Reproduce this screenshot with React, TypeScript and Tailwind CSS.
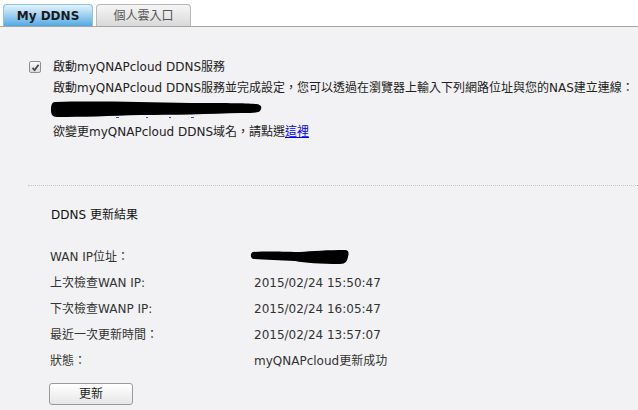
import React from "react";

const rows: [string, string | null][] = [
  ["WAN IP位址：", null],
  ["上次檢查WAN IP:", "2015/02/24 15:50:47"],
  ["下次檢查WANP IP:", "2015/02/24 16:05:47"],
  ["最近一次更新時間：", "2015/02/24 13:57:07"],
  ["狀態：", "myQNAPcloud更新成功"],
];

export default function App() {
  return (
    <div
      className="w-[638px] h-[410px] overflow-hidden bg-[#f2f2f4] text-[12px] text-[#222]"
      style={{ fontFamily: "'DejaVu Sans', 'Noto Sans CJK TC', sans-serif" }}
    >
      {/* Tabs */}
      <div className="h-[27px] bg-white border-b border-[#a5a5a5] flex items-end pl-[3px] gap-[3px]">
        <div className="w-[90px] h-[22px] rounded-t-[4px] border border-b-0 border-[#8fc3e6] bg-gradient-to-b from-[#e4f3fc] to-[#4fa9e3] flex items-center justify-center font-bold text-[#1a1a1a] leading-none">
          My DDNS
        </div>
        <div className="w-[95px] h-[22px] rounded-t-[4px] border border-b-0 border-[#b8b8b8] bg-gradient-to-b from-[#f6f6f6] to-[#d9d9d9] flex items-center justify-center text-[#555] leading-none">
          個人雲入口
        </div>
      </div>

      {/* Top section */}
      <div className="pt-[30px] pl-[29px]">
        <div className="flex items-center h-[20px]">
          <span className="w-[12px] h-[12px] border border-[#8e8e8e] rounded-[2px] bg-gradient-to-b from-[#fbfbfb] to-[#dcdcdc] flex items-center justify-center mr-[12px]">
            <svg width="9" height="9" viewBox="0 0 9 9">
              <path d="M1.5 4.8 L3.6 7 L7.6 1.8" fill="none" stroke="#4a4a4a" strokeWidth="1.8" />
            </svg>
          </span>
          <span>啟動myQNAPcloud DDNS服務</span>
        </div>
        <div className="pl-[24px]">
          <div className="h-[21px] flex items-center">
            啟動myQNAPcloud DDNS服務並完成設定，您可以透過在瀏覽器上輸入下列網路位址與您的NAS建立連線：
          </div>
          <div className="h-[24px] relative">
            <svg width="212" height="20" viewBox="0 0 212 20" className="absolute left-[-2px] top-[3px]">
              <path d="M4 1 C40 0 90 1 140 2 C170 2 195 2 204 3 C210 3 211 6 210 8 C209 12 205 12 190 12 C160 13 120 14 90 14 C60 15 30 16 6 16 C1 16 0 13 0 9 C0 4 1 1 4 1 Z" fill="#000" />
              <path d="M65 16.5 h3 M95 16.5 h2 M118 16.5 h2 M140 16.5 h3" stroke="#2a4fd6" strokeWidth="1.2" />
            </svg>
          </div>
          <div className="h-[20px] flex items-center">
            欲變更myQNAPcloud DDNS域名，請點選
            <a className="text-[#0000ee] underline">這裡</a>
          </div>
        </div>
      </div>

      {/* Divider */}
      <div className="ml-[28px] mt-[43px] border-t border-dotted border-[#c4c4c4]" />

      {/* Results */}
      <div className="pl-[49px]">
        <div className="h-[20px] mt-[19px] flex items-center pl-[2px] text-[#111]">DDNS 更新結果</div>
        <div className="mt-[19px]">
          {rows.map(([label, value]) => (
            <div key={label} className="h-[26px] flex items-center text-[#333]">
              <span className="w-[205px] pl-[1px]">{label}</span>
              {value ? (
                <span>{value}</span>
              ) : (
                <svg width="100" height="16" viewBox="0 0 100 16" className="-ml-[4px]">
                  <path d="M3 3 C20 2 40 3 50 3 C60 2 80 1 95 1 C99 1 99 4 98 8 C97 12 96 15 90 15 C70 15 55 14 45 12 C30 11 15 11 4 10 C0 10 0 4 3 3 Z" fill="#000" />
                </svg>
              )}
            </div>
          ))}
        </div>
        <button className="mt-[9px] w-[84px] h-[22px] border border-[#9a9a9a] rounded-[3px] bg-gradient-to-b from-[#ffffff] to-[#e6e6e6] text-[#222] text-[12px] leading-none flex items-center justify-center">
          更新
        </button>
      </div>
    </div>
  );
}
